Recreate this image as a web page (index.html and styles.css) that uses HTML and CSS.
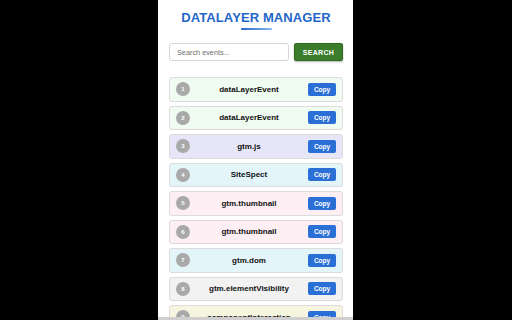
FILE: index.html
```html
<!DOCTYPE html>
<html lang="en">
<head>
    <meta charset="UTF-8">
    <meta name="viewport" content="width=device-width, initial-scale=1.0">
    <title>DataLayer Manager</title>
    <link rel="stylesheet" href="styles.css">
</head>
<body>
    <div class="popup">
        <h1>DATALAYER MANAGER</h1>
        <div class="title-line"></div>
        <div class="search-bar">
            <input type="text" id="buscar" placeholder="Search events...">
            <button class="search-btn">SEARCH</button>
        </div>
        <div class="event-list">
            <div class="event mint">
                <span class="num">1</span>
                <span class="name">dataLayerEvent</span>
                <button class="copy-btn">Copy</button>
            </div>
            <div class="event mint">
                <span class="num">2</span>
                <span class="name">dataLayerEvent</span>
                <button class="copy-btn">Copy</button>
            </div>
            <div class="event lavender">
                <span class="num">3</span>
                <span class="name">gtm.js</span>
                <button class="copy-btn">Copy</button>
            </div>
            <div class="event cyan">
                <span class="num">4</span>
                <span class="name">SiteSpect</span>
                <button class="copy-btn">Copy</button>
            </div>
            <div class="event pink">
                <span class="num">5</span>
                <span class="name">gtm.thumbnail</span>
                <button class="copy-btn">Copy</button>
            </div>
            <div class="event pink">
                <span class="num">6</span>
                <span class="name">gtm.thumbnail</span>
                <button class="copy-btn">Copy</button>
            </div>
            <div class="event cyan">
                <span class="num">7</span>
                <span class="name">gtm.dom</span>
                <button class="copy-btn">Copy</button>
            </div>
            <div class="event grey">
                <span class="num">8</span>
                <span class="name">gtm.elementVisibility</span>
                <button class="copy-btn">Copy</button>
            </div>
            <div class="event yellow">
                <span class="num">9</span>
                <span class="name">componentInteraction</span>
                <button class="copy-btn">Copy</button>
            </div>
        </div>
    </div>
</body>
</html>
```

FILE: styles.css
```css
body {
    font-family: 'Liberation Sans', Arial, sans-serif;
    background-color: #000;
    margin: 0;
    height: 100vh;
    overflow: hidden;
}
.popup {
    width: 174px;
    height: 307px;
    margin-left: 158px;
    padding: 10px 10px 0 11px;
    background: #fff;
    border-bottom: 3px solid #cfcfcf;
    overflow: hidden;
}
h1 {
    margin: 0;
    font-size: 13px;
    line-height: 15px;
    letter-spacing: 0.1px;
    color: #1f66c9;
    text-align: center;
}
.title-line {
    width: 31px;
    height: 2px;
    margin: 3px auto 13px;
    background: linear-gradient(to right, #1f66c9, #8db8ee);
    border-radius: 1px;
}
.search-bar {
    display: flex;
    gap: 5px;
    margin-bottom: 16px;
}
input {
    width: 120px;
    height: 18px;
    box-sizing: border-box;
    padding: 0 7px;
    border: 1px solid #d6d6d6;
    border-radius: 3px;
    font-family: inherit;
    font-size: 7.3px;
}
input::placeholder {
    color: #707070;
}
.search-btn {
    width: 49px;
    height: 18px;
    padding: 0;
    background-color: #3a7d2c;
    border: 1px solid #2f6a23;
    border-radius: 2px;
    color: #fff;
    font-family: inherit;
    font-weight: bold;
    font-size: 7px;
    letter-spacing: 0.3px;
    box-shadow: 0 1px 2px rgba(0, 0, 0, 0.3);
}
.event-list {
    display: flex;
    flex-direction: column;
    gap: 4px;
}
.event {
    display: flex;
    align-items: center;
    flex-shrink: 0;
    height: 24.5px;
    box-sizing: border-box;
    padding: 0 6px 0 6px;
    border: 1px solid #dcdcdc;
    border-radius: 3px;
}
.num {
    width: 14px;
    height: 14px;
    border-radius: 50%;
    background-color: #a9a9a9;
    color: #fff;
    font-size: 6px;
    font-weight: bold;
    line-height: 14px;
    text-align: center;
    flex-shrink: 0;
}
.name {
    flex: 1;
    text-align: center;
    font-size: 8px;
    font-weight: bold;
    color: #111;
    white-space: nowrap;
}
.copy-btn {
    width: 28px;
    height: 13px;
    padding: 0;
    background-color: #2a6fd6;
    border: none;
    border-radius: 2px;
    color: #fff;
    font-family: inherit;
    font-size: 6.5px;
    font-weight: bold;
    flex-shrink: 0;
}
.mint { background-color: #f0fbf2; }
.lavender { background-color: #e6e6f8; }
.cyan { background-color: #e4f5fa; }
.pink { background-color: #fdeff3; }
.grey { background-color: #f2f2f2; }
.yellow { background-color: #f6f5e0; }
```
